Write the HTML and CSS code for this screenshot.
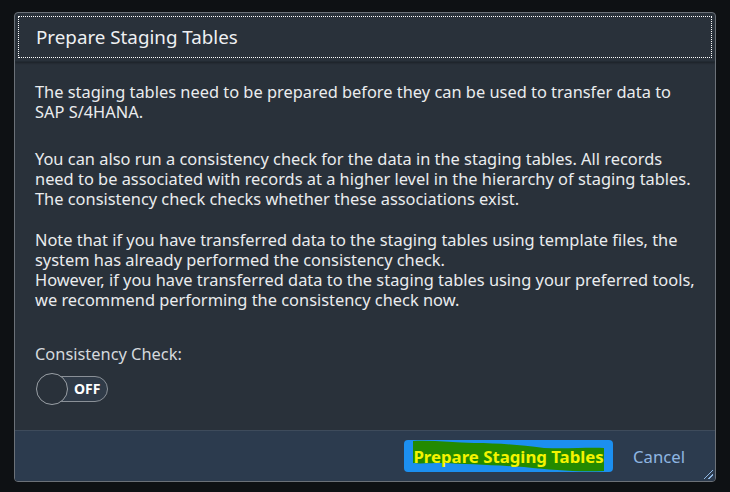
FILE: index.html
```html
<!DOCTYPE html>
<html lang="en">
<head>
    <meta charset="UTF-8">
    <title>Prepare Staging Tables</title>
    <link rel="stylesheet" href="styles.css">
</head>
<body>
    <div class="dialog">
        <div class="dialog-header">
            <h2 class="dialog-title">Prepare Staging Tables</h2>
        </div>
        <div class="dialog-body">
            <p class="intro">The staging tables need to be prepared before they can be used to transfer data to<br>SAP S/4HANA.</p>
            <p>You can also run a consistency check for the data in the staging tables. All records<br>need to be associated with records at a higher level in the hierarchy of staging tables.<br>The consistency check checks whether these associations exist.</p>
            <p>Note that if you have transferred data to the staging tables using template files, the<br>system has already performed the consistency check.<br>However, if you have transferred data to the staging tables using your preferred tools,<br>we recommend performing the consistency check now.</p>
            <div class="field-label">Consistency Check:</div>
            <div class="switch">
                <span class="switch-track">OFF</span>
                <span class="switch-knob"></span>
            </div>
        </div>
        <div class="dialog-footer">
            <button class="btn-primary">
                <svg class="marker" width="209" height="32" viewBox="0 0 209 32">
                    <path d="M9 1 C30 0 50 3 70 3 C95 3 115 5 140 8 C165 9 185 7 200 8 L200 31 C170 32 150 30 120 27 C90 25 60 24 40 23 C25 23 15 24 9 23 Z" fill="#238a00"/>
                </svg>
                <span class="btn-text">Prepare Staging Tables</span>
            </button>
            <button class="btn-link">Cancel</button>
            <span class="grip"></span>
        </div>
    </div>
</body>
</html>
```

FILE: styles.css
```css
body {
    margin: 0;
    background-color: #0e1114;
    font-family: "Noto Sans", "Open Sans", sans-serif;
}
.dialog {
    margin: 12px 0 0 14px;
    width: 700px;
    height: 468px;
    border: 1px solid #6b7178;
    border-radius: 4px;
    background-color: #29313a;
    display: flex;
    flex-direction: column;
    overflow: hidden;
}
.dialog-header {
    padding: 3px;
    border-bottom: 1px solid #222a32;
    box-shadow: 0 1px 2px rgba(0, 0, 0, 0.35);
}
.dialog-title {
    margin: 0;
    height: 40px;
    padding-left: 17px;
    border: 1px dotted #ffffff;
    font-size: 18.8px;
    font-weight: normal;
    color: #eef0f2;
    line-height: 40px;
}
.dialog-body {
    flex: 1;
    padding: 20px 8px 0 20px;
    color: #eaecee;
    font-size: 16.4px;
    line-height: 20px;
    white-space: nowrap;
}
.dialog-body p {
    margin: 0 0 21px 0;
}
.dialog-body .intro {
    margin-bottom: 27px;
}
.field-label {
    margin-top: 34px;
    color: #d5d9dd;
}
.switch {
    position: relative;
    width: 72px;
    height: 32px;
    margin: 9px 0 0 1px;
}
.switch-track {
    position: absolute;
    left: 12px;
    top: 3px;
    width: 58px;
    height: 24px;
    border: 1px solid #8a9097;
    border-radius: 13px;
    background-color: #303b48;
    color: #ffffff;
    font-size: 14px;
    font-weight: bold;
    line-height: 24px;
    text-indent: 25px;
}
.switch-knob {
    position: absolute;
    left: 0;
    top: 0;
    width: 30px;
    height: 30px;
    border: 1px solid #9aa0a6;
    border-radius: 50%;
    background-color: #29313a;
}
.dialog-footer {
    position: relative;
    height: 50px;
    background-color: #2c3b4e;
    border-top: 1px solid #3e4b5b;
    display: flex;
    align-items: center;
    justify-content: flex-end;
    gap: 20px;
    padding-right: 30px;
}
.btn-primary {
    position: relative;
    width: 209px;
    height: 32px;
    background-color: #1c8ff0;
    border: none;
    border-radius: 4px;
    padding: 0;
    font-family: "Noto Sans", "Open Sans", sans-serif;
    font-size: 16.8px;
    font-weight: bold;
    color: #f4f400;
}
.marker {
    position: absolute;
    left: 0;
    top: 0;
}
.btn-text {
    position: relative;
}
.btn-link {
    background: none;
    border: none;
    padding: 0;
    font-family: "Noto Sans", "Open Sans", sans-serif;
    font-size: 16.7px;
    color: #8fb6e2;
}
.grip {
    position: absolute;
    right: 2px;
    bottom: 2px;
    width: 9px;
    height: 9px;
    background: linear-gradient(135deg, transparent 45%, #8fb6e2 45%, #8fb6e2 55%, transparent 55%, transparent 70%, #8fb6e2 70%, #8fb6e2 80%, transparent 80%);
}
```
